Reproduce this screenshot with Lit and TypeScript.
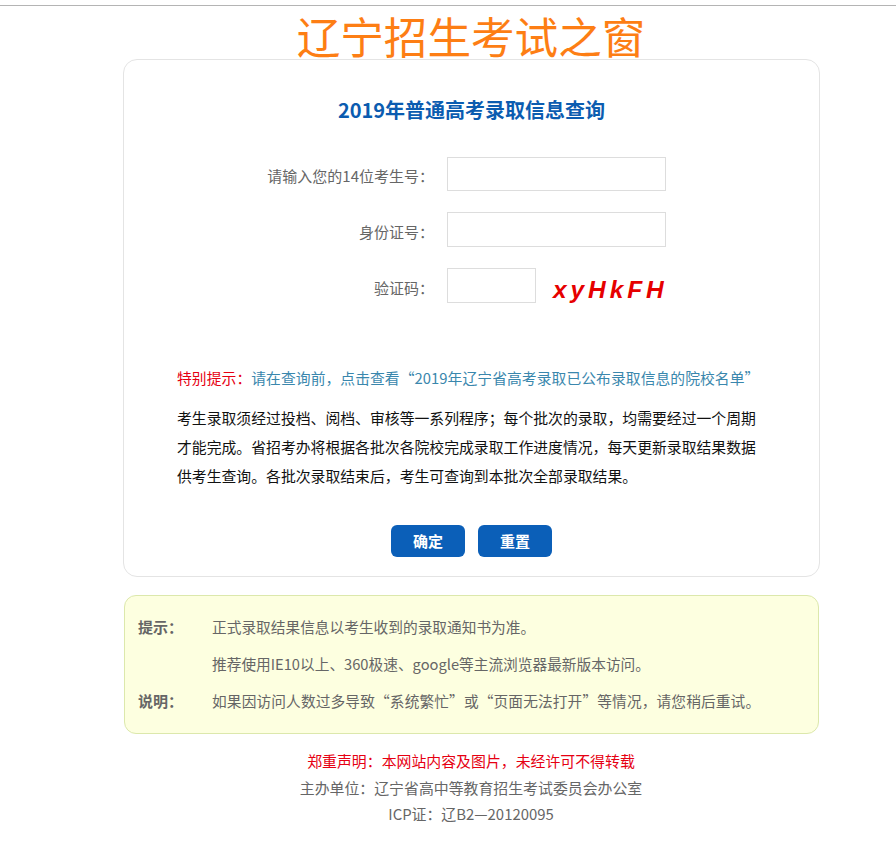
import { LitElement, html, css } from 'lit';
import { customElement } from 'lit/decorators.js';

@customElement('app-root')
export class AppRoot extends LitElement {
  static styles = css`
    :host {
      display: block;
      height: 840px;
      background: #fff;
      border-top: 1px solid #b4b4b4;
      box-sizing: border-box;
      margin-top: 5px;
      font-family: "Noto Sans CJK SC", "Noto Sans", sans-serif;
      font-size: 15px;
      color: #666;
    }
    .logo {
      box-sizing: border-box;
      width: 696px;
      margin-left: 123px;
      height: 53px;
      padding-top: 5px;
      text-align: center;
      font-size: 43.6px;
      line-height: 48px;
      color: #fd7e14;
      font-weight: 400;
      white-space: nowrap;
    }
    .card {
      box-sizing: border-box;
      width: 697px;
      height: 518px;
      margin-left: 123px;
      border: 1px solid #e4e4e4;
      border-radius: 14px;
      padding-top: 35px;
    }
    h1 {
      margin: 0;
      text-align: center;
      font-size: 20px;
      line-height: 30px;
      font-weight: 700;
      color: #0b5cb0;
    }
    .form {
      margin-top: 32px;
      display: grid;
      grid-template-columns: 310px auto;
      row-gap: 21px;
      align-items: center;
      justify-content: start;
    }
    label {
      text-align: right;
      height: 34px;
      line-height: 37px;
      white-space: nowrap;
    }
    .field {
      display: flex;
      align-items: center;
      margin-left: 13px;
    }
    input {
      box-sizing: border-box;
      width: 219px;
      height: 35px;
      border: 1px solid #ddd;
      background: #fff;
      padding: 0 6px;
      outline: none;
    }
    input.first {
      height: 34px;
    }
    input.short {
      width: 89px;
    }
    .code {
      margin-left: 17px;
      height: 35px;
      font-family: "Liberation Sans", Arial, sans-serif;
      font-size: 24.5px;
      line-height: 43px;
      font-weight: 700;
      font-style: italic;
      letter-spacing: 3.9px;
      color: #e60000;
    }
    .notice {
      width: 600px;
      margin: 60px 0 0 53px;
    }
    .special {
      line-height: 30px;
      white-space: nowrap;
      font-size: 14.8px;
      letter-spacing: 0.05px;
    }
    .special span {
      color: #e60012;
    }
    .special a {
      color: #3a87ad;
      text-decoration: none;
    }
    .rules {
      margin: 10px 0 0;
      width: 590px;
      font-size: 14.85px;
      line-height: 29.2px;
      color: #111;
    }
    .buttons {
      display: flex;
      justify-content: center;
      gap: 13px;
      margin-top: 34px;
    }
    button {
      width: 74px;
      height: 32px;
      border: none;
      border-radius: 6px;
      background: #0b5fb8;
      color: #fff;
      font: 700 15px "Noto Sans CJK SC", sans-serif;
      padding: 0;
    }
    .tips {
      box-sizing: border-box;
      width: 695px;
      height: 139px;
      margin: 18px 0 0 124px;
      padding: 12px 13px;
      border: 1px solid #dce8ac;
      border-radius: 12px;
      background: #fdffe0;
    }
    .tip {
      display: grid;
      grid-template-columns: 74px 1fr;
      height: 37px;
      line-height: 37px;
      font-size: 14.7px;
      white-space: nowrap;
    }
    .tip b {
      font-size: 15px;
    }
    .tip .wide {
      letter-spacing: 0.13px;
    }
    .foot {
      margin: 14px 0 0 123px;
      width: 696px;
      text-align: center;
      font-size: 14.9px;
      line-height: 26.5px;
    }
    .foot .warn {
      color: #e60012;
    }
  `;

  render() {
    return html`
      <div class="logo">辽宁招生考试之窗</div>
      <div class="card">
        <h1>2019年普通高考录取信息查询</h1>
        <div class="form">
          <label>请输入您的14位考生号：</label>
          <div class="field"><input class="first" type="text" /></div>
          <label>身份证号：</label>
          <div class="field"><input type="text" /></div>
          <label>验证码：</label>
          <div class="field">
            <input class="short" type="text" />
            <span class="code">xyHkFH</span>
          </div>
        </div>
        <div class="notice">
          <div class="special">
            <span>特别提示：</span><a href="#">请在查询前，点击查看“2019年辽宁省高考录取已公布录取信息的院校名单”</a>
          </div>
          <p class="rules">
            考生录取须经过投档、阅档、审核等一系列程序；每个批次的录取，均需要经过一个周期才能完成。省招考办将根据各批次各院校完成录取工作进度情况，每天更新录取结果数据供考生查询。各批次录取结束后，考生可查询到本批次全部录取结果。
          </p>
        </div>
        <div class="buttons">
          <button>确定</button>
          <button>重置</button>
        </div>
      </div>
      <div class="tips">
        <div class="tip"><b>提示：</b><span>正式录取结果信息以考生收到的录取通知书为准。</span></div>
        <div class="tip"><b></b><span>推荐使用IE10以上、360极速、google等主流浏览器最新版本访问。</span></div>
        <div class="tip"><b>说明：</b><span class="wide">如果因访问人数过多导致“系统繁忙”或“页面无法打开”等情况，请您稍后重试。</span></div>
      </div>
      <div class="foot">
        <div class="warn">郑重声明：本网站内容及图片，未经许可不得转载</div>
        <div>主办单位：辽宁省高中等教育招生考试委员会办公室</div>
        <div>ICP证：辽B2—20120095</div>
      </div>
    `;
  }
}
